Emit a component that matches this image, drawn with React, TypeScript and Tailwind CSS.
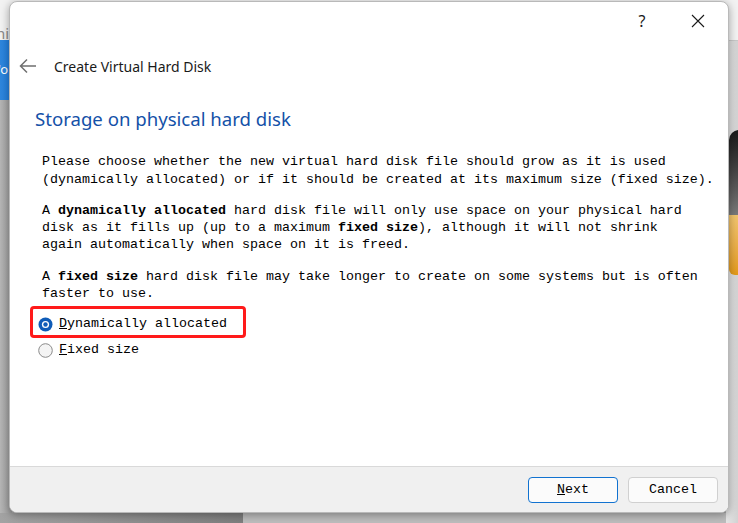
import React from "react";

const mono = { fontFamily: '"Liberation Mono", "DejaVu Sans Mono", monospace' };
const ui = { fontFamily: '"Noto Sans", "Open Sans", sans-serif' };

function Radio({ checked }: { checked: boolean }) {
  return checked ? (
    <svg width="15" height="15" viewBox="0 0 15 15">
      <circle cx="7.5" cy="7.5" r="7" fill="#0f5cb8" />
      <circle cx="7.5" cy="7.5" r="3.6" fill="#ffffff" />
      <circle cx="7.5" cy="7.5" r="2.2" fill="#0f5cb8" />
    </svg>
  ) : (
    <svg width="15" height="15" viewBox="0 0 15 15">
      <circle cx="7.5" cy="7.5" r="6.8" fill="#f4f4f4" stroke="#8a8a8a" strokeWidth="1" />
    </svg>
  );
}

export default function App() {
  return (
    <div className="relative w-[738px] h-[523px] overflow-hidden bg-[#a9a9a9]">
      {/* desktop behind the dialog */}
      <div className="absolute left-0 top-0 w-[738px] h-[40px] bg-[#f2f2f2]" />
      <div className="absolute left-[-4px] top-[22px] text-[15px] text-[#8a8a8a]" style={ui}>hi</div>
      <div className="absolute left-0 top-[40px] w-[12px] h-[60px] bg-gradient-to-r from-[#2f86dc] to-[#1f7fe0]" />
      <div className="absolute left-[-2px] top-[60px] text-[13px] text-white" style={ui}>'o</div>
      <div className="absolute left-0 top-[100px] w-[12px] h-[423px] bg-gradient-to-r from-[#b5b5b5] to-[#9c9c9c]" />
      <div className="absolute left-0 top-[513px] w-[243px] h-[10px] bg-gradient-to-r from-[#a3a3a3] to-[#7f7f7f]" />
      <div className="absolute left-[243px] top-[513px] w-[495px] h-[10px] bg-[#bdbdbd]" />
      <div className="absolute left-[726px] top-[40px] w-[12px] h-[483px] bg-gradient-to-r from-[#e6e6e6] to-[#d2d2d2]" />
      <div className="absolute left-[726px] top-[40px] w-[12px] h-px bg-[#c8c8c8]" />
      <div className="absolute left-[729px] top-[130px] w-[14px] h-[110px] rounded-l-[10px] bg-gradient-to-b from-[#1a1a1a] via-[#555] to-[#9a9a9a]" />
      <div className="absolute left-[729px] top-[215px] w-[12px] h-[60px] rounded-bl-[6px] bg-gradient-to-b from-[#f1c46d] to-[#e29a17]" />

      {/* dialog window */}
      <div className="absolute left-[9px] top-[1px] w-[720px] h-[512px] flex flex-col bg-white rounded-[8px] overflow-hidden border border-[#b9b9b9] shadow-[0_2px_8px_rgba(0,0,0,0.35)]">
        {/* title bar */}
        <div className="h-[36px] flex items-center justify-end shrink-0 pt-[2px]">
          <span className="w-[40px] text-center text-[16px] text-[#1a1a1a] mr-[29px]" style={ui}>?</span>
          <svg width="14" height="14" viewBox="0 0 14 14" className="mr-[23px]">
            <path d="M1 1 L13 13 M13 1 L1 13" stroke="#1a1a1a" strokeWidth="1.1" />
          </svg>
        </div>

        {/* header */}
        <div className="h-[56px] flex items-center shrink-0 pl-[9px]">
          <svg width="18" height="16" viewBox="0 0 18 16" className="mr-[17px]">
            <path d="M17 8 H2 M8 1.5 L1.5 8 L8 14.5" stroke="#6f6f6f" strokeWidth="1.5" fill="none" />
          </svg>
          <span className="text-[14px] text-[#1a1a1a]" style={ui}>Create Virtual Hard Disk</span>
        </div>

        {/* body */}
        <div className="flex-1 flex flex-col pl-[25px] pr-[12px]">
          <div className="text-[18.6px] leading-[28px] text-[#1451a8] mt-[11px]" style={ui}>
            Storage on physical hard disk
          </div>
          <div className="pl-[7px] mt-[20px] text-[13.33px] leading-[17px] text-black" style={mono}>
            <p className="whitespace-pre leading-[18px]">
              {"Please choose whether the new virtual hard disk file should grow as it is used\n(dynamically allocated) or if it should be created at its maximum size (fixed size)."}
            </p>
            <p className="whitespace-pre mt-[13px]">
              A <b>dynamically allocated</b>{" hard disk file will only use space on your physical hard\ndisk as it fills up (up to a maximum "}
              <b>fixed size</b>
              {"), although it will not shrink\nagain automatically when space on it is freed."}
            </p>
            <p className="whitespace-pre mt-[15px]">
              A <b>fixed size</b>
              {" hard disk file may take longer to create on some systems but is often\nfaster to use."}
            </p>
          </div>
          <div className="relative mt-[14px] pl-[3px] flex flex-col gap-[10px] text-[13.33px] text-black" style={mono}>
            <div className="flex items-center h-[16px] gap-[6px]">
              <Radio checked />
              <span>
                <span className="underline">D</span>ynamically allocated
              </span>
            </div>
            <div className="flex items-center h-[16px] gap-[6px]">
              <Radio checked={false} />
              <span>
                <span className="underline">F</span>ixed size
              </span>
            </div>
            <div className="absolute left-[-5px] top-[-10px] w-[216px] h-[32px] border-[3px] border-[#ff1a1a] rounded-[4px]" />
          </div>
        </div>

        {/* footer */}
        <div className="h-[46px] shrink-0 bg-[#f0f0f0] border-t border-[#d9d9d9] flex items-start justify-end gap-[10px] pr-[10px] pt-[10px]">
          <button className="w-[90px] h-[26px] rounded-[4px] border border-[#1172d0] bg-[#fbfbfb] text-[13.33px] text-black" style={mono}>
            <span className="underline">N</span>ext
          </button>
          <button className="w-[90px] h-[26px] rounded-[4px] border border-[#d0d0d0] bg-[#fbfbfb] text-[13.33px] text-black" style={mono}>
            Cancel
          </button>
        </div>
      </div>
    </div>
  );
}
